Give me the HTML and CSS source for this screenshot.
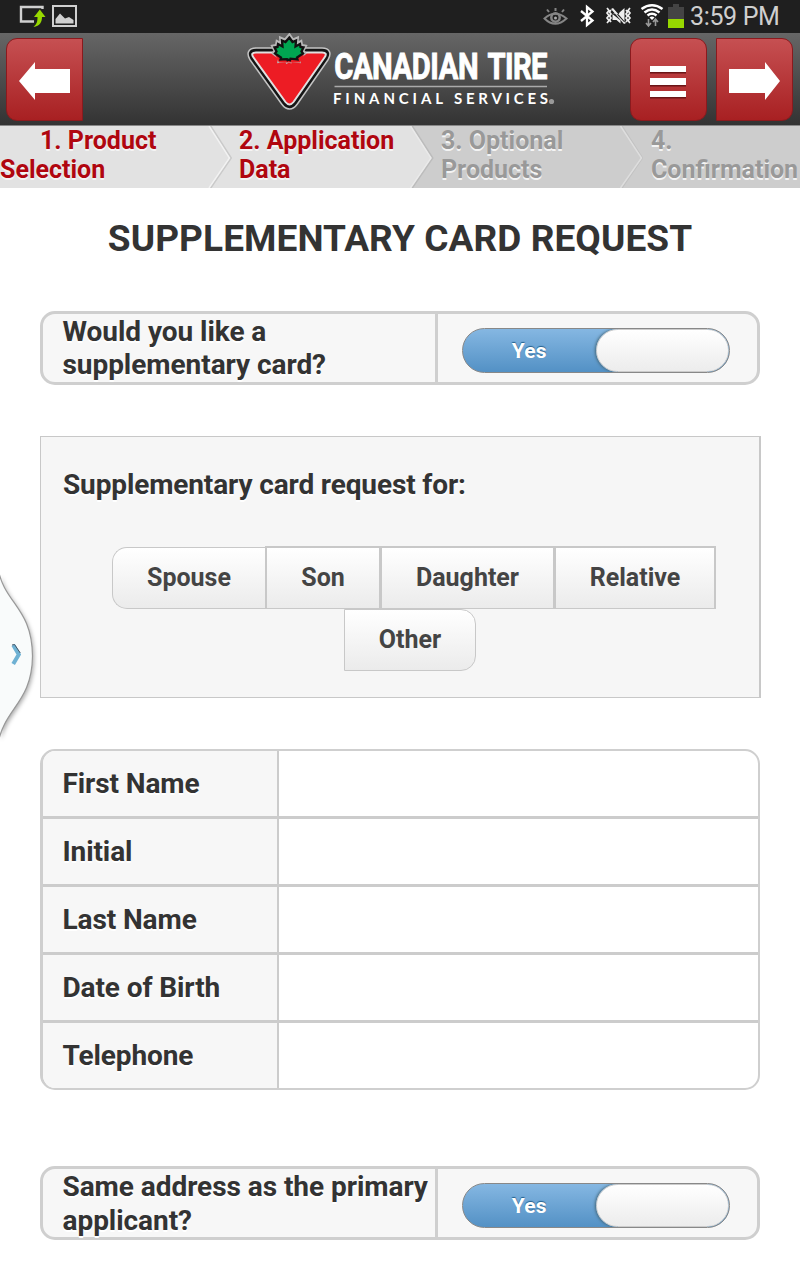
FILE: index.html
```html
<!DOCTYPE html>
<html lang="en">
<head>
<meta charset="utf-8">
<title>Supplementary Card Request</title>
<link rel="stylesheet" href="styles.css">
</head>
<body>
<div class="status">
  <svg class="status-left" width="80" height="33" viewBox="0 0 80 33">
    <path d="M42.500 9V7H21V21.500H34" fill="none" stroke="#d0d0d0" stroke-width="2.400"/>
    <path d="M39.800 9.500L45.500 17H42C42 22 40 26 33.500 27C37 24 37.500 21 37.500 17H34z" fill="#97d800"/>
    <rect x="53" y="6" width="23" height="20" fill="none" stroke="#d0d0d0" stroke-width="2"/>
    <path d="M55.500 23.500V19L60 13.500L65 18.500L69 17L73.500 20V23.500z" fill="#d0d0d0"/>
  </svg>
  <div class="status-right">
    <svg width="144" height="33" viewBox="540 0 144 33">
      <g fill="none" stroke="#858585" stroke-width="2">
        <path d="M544.500 18.500Q555 9 566.500 18.500Q555 29 544.500 18.500z"/>
        <path d="M555.500 11V8M549 12L547 9.500M562 12L564 9.500"/>
        <circle cx="555.500" cy="17.500" r="4.200" stroke-width="2.500"/>
      </g>
      <circle cx="555.500" cy="18" r="1.500" fill="#aaa"/>
      <path d="M581 11L592.500 20.500L587 25V7L592.500 11.500L581 21" fill="none" stroke="#fff" stroke-width="2.300"/>
      <g fill="none" stroke="#eee" stroke-width="1.700">
        <path d="M607 8l2 2.500-2 2.500 2 2.500-2 2.500 2 2.500-2 2.500M611 10l-1.500 2 1.500 2-1.500 2 1.500 2-1.500 2 1.500 2M630 8l-2 2.500 2 2.500-2 2.500 2 2.500-2 2.500 2 2.500M626 10l1.500 2-1.500 2 1.500 2-1.500 2 1.500 2-1.500 2"/>
      </g>
      <path d="M612.500 13h3l9 9.500V8l-5 4.500-1 2zM611 9l2-1 13 15-2 1zM612.500 14v6h4l4 3.500v-3z" fill="#eee"/>
      <g fill="none" stroke="#fff" stroke-width="2.500">
        <path d="M641.500 9Q652 1.500 662.500 9M644.500 12.500Q652 6.500 659.500 12.500M647.500 15.500Q652 12 656.500 15.500"/>
      </g>
      <path d="M649.500 17.500Q652 15.500 654.500 17.500L652 20z" fill="#fff"/>
      <path d="M648.500 19v6M646 23l2.500 3 2.500-3M655.500 26v-6M653 22l2.500-3 2.500 3" fill="none" stroke="#999" stroke-width="1.600"/>
      <path d="M668 7h5V4h6v3h5v12h-16z" fill="#444"/>
      <path d="M668 19h16v9h-16z" fill="#97d800"/>
    </svg>
    <span class="clock">3:59 PM</span>
  </div>
</div>

<header class="header">
  <button class="nav back" aria-label="Back">
    <svg width="52" height="38" viewBox="0 0 52 38"><path d="M0 19L16 0V7H51V31H16V38z" fill="#fff"/></svg>
  </button>
  <svg class="logo" width="312" height="80" viewBox="245 33 312 80">
    <path d="M256 51.500H322Q329 51.500 325 58L294.500 102Q289.500 109 284.500 102L253 58Q249 51.500 256 51.500z" fill="#111" stroke="#c4c4c4" stroke-width="8.500" stroke-linejoin="round"/>
    <path d="M256 51.500H322Q329 51.500 325 58L294.500 102Q289.500 109 284.500 102L253 58Q249 51.500 256 51.500z" fill="#ed1c24" stroke="#151515" stroke-width="5.500" stroke-linejoin="round"/>
    <path d="M256 52.500H322Q328 52.500 324.500 57.500L293.500 102Q289.500 107 285.500 102L253.500 57.500Q250 52.500 256 52.500z" fill="#ed1c24" stroke="#e0e0e0" stroke-width="2"/>
    <path d="M289.300 37l3.200 4.500 3.500-1.500-.5 6 4.500-2.500.5 3 3 .5-2 4 1.500 2-6 4.500.5 2.500-7-.8-.5 1-1.500-.5-1 .5-.5-1-6.500.8.500-2.500-6-4.500 1.500-2-2-4 3-.5.500-3 4.500 2.500-.5-6 3.500 1.500z" fill="none" stroke="#b8b8b8" stroke-width="5.500"/>
    <path d="M275 54.500h29l-4 8h-21z" fill="#ed1c24"/>
    <path d="M289.300 37.500l3.200 4.500 3.500-1.500-.5 6 4.500-2.500.5 3 3 .5-2 4 1.500 2-6 4 .5 2-7-.8-.5 1.500-1.500-.5-1 .5-.5-1-6.500.3.500-2-6-4 1.500-2-2-4 3-.5.500-3 4.500 2.500-.5-6 3.500 1.500z" fill="#00a551" stroke="#111" stroke-width="2.300"/>
    <g transform="scale(.78 1)">
      <text class="brand" x="428.500" y="79.300" textLength="185">CANADIAN</text>
      <text class="brand" x="625" y="79.300" textLength="77">TIRE</text>
    </g>
    <path d="M334.500 86.500H547" stroke="#aaa" stroke-width="1.500"/>
    <text class="brand-sub" x="333" y="103.500" textLength="110">FINANCIAL</text>
    <text class="brand-sub" x="454" y="103.500" textLength="94">SERVICES</text>
    <circle cx="551.500" cy="101.500" r="2.600" fill="#999"/>
  </svg>
  <button class="nav menu" aria-label="Menu"><i></i><i></i><i></i></button>
  <button class="nav next" aria-label="Next">
    <svg width="52" height="38" viewBox="0 0 52 38"><path d="M51 19L36 0V7H0V31H36V38z" fill="#fff"/></svg>
  </button>
</header>

<nav class="steps">
  <div class="step on first"><span>1. Product Selection</span>
    <svg class="tip" width="26" height="62" viewBox="0 0 26 62"><path d="M4.500 0L25 32L4.500 62" fill="none" stroke="#cacaca" stroke-width="2"/><path d="M3 0L23.500 32L3 62" fill="none" stroke="#f2f2f2" stroke-width="1.500"/></svg>
  </div>
  <div class="step on second"><span>2. Application Data</span>
    <svg class="tip" width="26" height="62" viewBox="0 0 26 62"><path d="M4 0L24.500 32L4 62H26V0z" fill="#cdcdcd"/><path d="M4 0L24.500 32L4 62" fill="none" stroke="#bcbcbc" stroke-width="2"/><path d="M2.500 0L23 32L2.500 62" fill="none" stroke="#eaeaea" stroke-width="1.500"/></svg>
  </div>
  <div class="step third"><span>3. Optional Products</span>
    <svg class="tip" width="26" height="62" viewBox="0 0 26 62"><path d="M5 0L25.500 32L5 62" fill="none" stroke="#c2c2c2" stroke-width="1.500"/><path d="M3.500 0L24.500 32L3.500 62" fill="none" stroke="#dedede" stroke-width="1.500"/></svg>
  </div>
  <div class="step fourth"><span>4. Confirmation</span></div>
</nav>

<main>
  <h1>SUPPLEMENTARY CARD REQUEST</h1>

  <section class="question">
    <div class="q-label">Would you like a<br>supplementary card?</div>
    <div class="q-value"><div class="toggle"><span>Yes</span><i></i></div></div>
  </section>

  <section class="panel">
    <h2>Supplementary card request for:</h2>
    <div class="choices">
      <button class="choice c-spouse">Spouse</button><button class="choice c-son">Son</button><button class="choice c-daughter">Daughter</button><button class="choice c-relative">Relative</button>
    </div>
    <div class="choices second-row"><button class="choice c-other">Other</button></div>
  </section>

  <section class="form">
    <label class="row"><span>First Name</span><b></b></label>
    <label class="row"><span>Initial</span><b></b></label>
    <label class="row"><span>Last Name</span><b></b></label>
    <label class="row"><span>Date of Birth</span><b></b></label>
    <label class="row"><span>Telephone</span><b></b></label>
  </section>

  <section class="question address">
    <div class="q-label">Same address as the primary<br>applicant?</div>
    <div class="q-value"><div class="toggle"><span>Yes</span><i></i></div></div>
  </section>
</main>

<svg class="drawer" width="44" height="190" viewBox="0 565 44 190">
  <path d="M-2 568C4 604 32 607 32.500 656C32 703 4 708 -2 744z" fill="#f9fbfb" stroke="#999" stroke-width="1.200"/>
  <path d="M13.200 645L18.800 654.500L13.200 664" fill="none" stroke="#6fb1d3" stroke-width="4"/>
  <path d="M12 645L14.500 644.500L20.300 653" fill="none" stroke="#456" stroke-width="1"/>
</svg>
</body>
</html>
```
FILE: styles.css
```css
* { box-sizing: border-box; }
body {
  margin: 0;
  width: 800px;
  height: 1280px;
  overflow: hidden;
  background: #fff;
  color: #333;
  font-family: Roboto, "Liberation Sans", sans-serif;
  font-weight: 700;
  position: relative;
}
button { font: inherit; color: inherit; padding: 0; margin: 0; }

.status {
  height: 33px;
  background: #1f1f1f;
  display: flex;
  justify-content: space-between;
}
.status-right { display: flex; width: 260px; }
.clock {
  font-size: 25px;
  font-weight: 400;
  line-height: 33px;
  letter-spacing: -.35px;
  color: #cfcfcf;
  margin-left: 6px;
  white-space: nowrap;
}

.header {
  height: 93px;
  background: linear-gradient(#666, #333);
  border-bottom: 1px solid #888;
  display: flex;
  align-items: flex-start;
  padding: 0 6px;
}
.nav {
  width: 77px;
  height: 83px;
  margin-top: 4.500px;
  border: 1.500px solid #8a1a1e;
  background: linear-gradient(#c65052, #a82022);
  display: flex;
  align-items: center;
  justify-content: center;
  flex: none;
}
.back { border-radius: 11px 0 0 11px; }
.back svg, .next svg { margin-top: 4px; }
.back svg { margin-left: 1px; }
.next { border-radius: 0 11px 11px 0; margin-left: 9px; }
.next svg { margin-top: 4px; }
.menu { border-radius: 11px; margin-left: 73px; flex-direction: column; gap: 6px; padding: 5px 2px 0 0; }
.menu i { width: 36px; height: 6.500px; background: #fff; box-shadow: 0 1.500px 0 #6b1517; }
.logo { margin-left: 162px; flex: none; }
.brand { font: 700 37.500px Roboto, sans-serif; fill: #fff; stroke: #fff; stroke-width: .9px; }
.brand-sub { font: 700 15px Lato, sans-serif; fill: #fff; }

.steps {
  height: 62px;
  display: grid;
  grid-template-columns: 232px 202px 209px 157px;
  background: #cdcdcd;
}
.step {
  position: relative;
  font-size: 25px;
  line-height: 29px;
  color: #999;
  text-shadow: 0 2px 0 #f4f4f4;
  padding-left: 8px;
}
.step span { display: block; width: 149px; position: relative; z-index: 1; }
.on { background: #e2e2e2; color: #b0060f; }
.first { padding-left: 0; }
.first span { text-indent: 40px; width: 170px; }
.second { padding-left: 7px; }
.second span { width: 165px; }
.third { padding-left: 7px; }
.tip { position: absolute; right: 0; top: 0; }

main { padding: 0 40px; }
h1 {
  margin: 0;
  height: 123px;
  padding-top: 30px;
  font-size: 37px;
  line-height: 42px;
  letter-spacing: .08px;
  text-align: center;
  white-space: nowrap;
}

.question {
  width: 720px;
  height: 74px;
  border: 3px solid #cfcfcf;
  border-radius: 15px;
  background: #f7f7f7;
  display: flex;
  font-size: 28px;
  line-height: 33px;
  letter-spacing: -.05px;
  text-shadow: 0 2px 0 #fff;
}
.q-label {
  width: 395px;
  padding: 1px 0 0 19.500px;
  border-right: 3px solid #cfcfcf;
  white-space: nowrap;
}
.q-value { padding: 14px 0 0 24px; }
.toggle {
  width: 268px;
  height: 45px;
  border: 1.500px solid #888;
  border-radius: 23px;
  background: linear-gradient(#85b7e2, #5391c5);
  display: flex;
  justify-content: space-between;
  overflow: hidden;
}
.toggle span {
  width: 133px;
  text-align: center;
  font-size: 21px;
  letter-spacing: .2px;
  line-height: 45px;
  color: #fff;
  text-shadow: 0 -1px 1px #23608f;
}
.toggle i {
  width: 134px;
  border-radius: 22px;
  background: linear-gradient(#fff, #ececec);
  border: 1px solid #ccc;
  box-shadow: -1px 0 3px #467;
}

.panel {
  width: 721px;
  height: 262px;
  margin-top: 51px;
  background: #f6f6f6;
  border: 1px solid #c8c8c8;
  border-right-width: 2px;
}
h2 {
  margin: 0;
  padding: 31px 0 0 22px;
  font-size: 28px;
  line-height: 34px;
  letter-spacing: -.13px;
  height: 109px;
  text-shadow: 0 2px 0 #fff;
}
.choices { display: flex; padding-left: 71px; height: 63px; }
.second-row { padding-left: 303px; }
.choice {
  height: 63px;
  border: 1px solid #c8c8c8;
  border-top-width: 2px;
  background: linear-gradient(#fff, #ebebeb);
  font-size: 25px;
  color: #444;
  padding-bottom: 2px;
}
.c-spouse { width: 153px; border-radius: 15px 0 0 15px; border-top-width: 1px; border-right: 0; height: 62px; margin-top: 1px; }
.c-son { width: 115px; border-left-width: 2px; }
.c-daughter { width: 174px; border-left-width: 2px; }
.c-relative { width: 162px; border-left-width: 2px; border-right-width: 2px; }
.c-other { width: 132px; border-radius: 0 15px 15px 0; border-top-width: 1px; height: 62px; }

.form {
  width: 720px;
  height: 341px;
  margin-top: 51px;
  border: 2.500px solid #cfcfcf;
  border-left-width: 3px;
  border-radius: 15px;
  overflow: hidden;
  background: #fff;
}
.row { display: flex; height: 68px; border-bottom: 3px solid #ccc; }
.row:last-child { border-bottom: 0; }
.row span {
  width: 236px;
  padding-left: 19.500px;
  border-right: 2px solid #ccc;
  background: #f7f7f7;
  font-size: 28px;
  line-height: 65px;
  letter-spacing: -.1px;
  text-shadow: 0 2px 0 #fff;
}
.row b { flex: 1; }
.address { margin-top: 76px; line-height: 33.500px; }

.drawer { position: absolute; left: 0; top: 565px; filter: drop-shadow(1px 2px 2px #aaa); }
```
